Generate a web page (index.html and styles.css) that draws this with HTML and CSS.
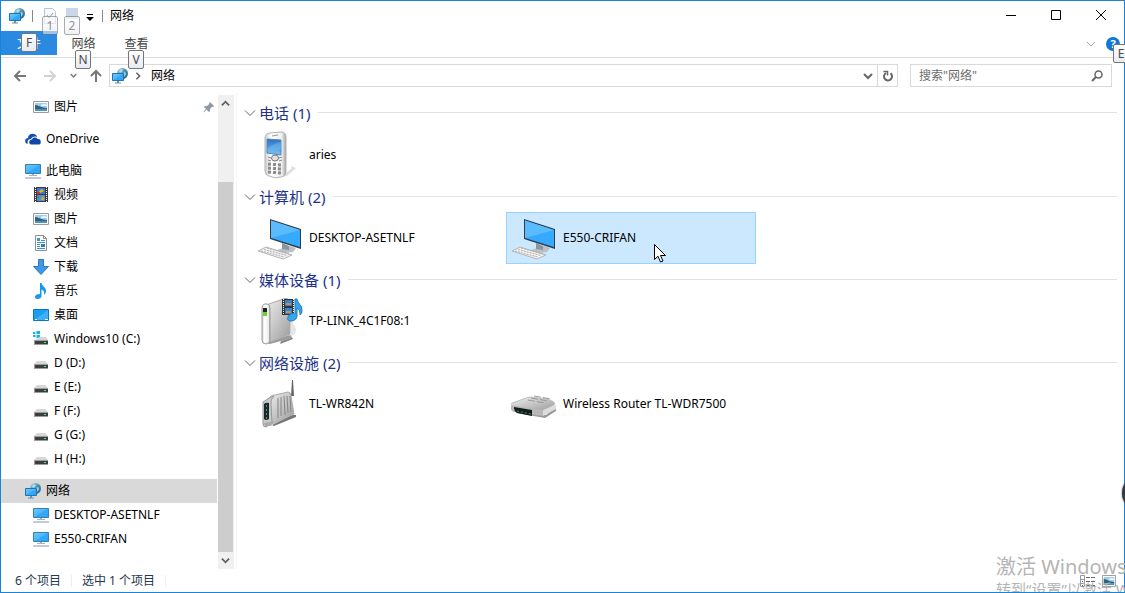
FILE: index.html
```html
<!DOCTYPE html>
<html lang="zh-CN">
<head>
    <meta charset="UTF-8">
    <meta name="viewport" content="width=device-width, initial-scale=1.0">
    <title>网络</title>
    <link rel="stylesheet" href="styles.css">
</head>
<body>
    <!-- icons -->
    <svg class="defs" width="0" height="0" aria-hidden="true">
        <defs>
            <linearGradient id="screen" x1="0" y1="0" x2="1" y2="1">
                <stop offset="0" stop-color="#6cc8ff"/><stop offset="0.5" stop-color="#4ab6fc"/><stop offset="0.5" stop-color="#33a9f8"/><stop offset="1" stop-color="#2ba5f7"/>
            </linearGradient>
            <linearGradient id="globe" x1="0" y1="0" x2="1" y2="1">
                <stop offset="0" stop-color="#a5d3e5"/><stop offset="0.5" stop-color="#4991b0"/><stop offset="1" stop-color="#1d5f80"/>
            </linearGradient>
            <linearGradient id="metal" x1="0" y1="0" x2="1" y2="1">
                <stop offset="0" stop-color="#f0f0f0"/><stop offset="1" stop-color="#9a9a9a"/>
            </linearGradient>
            <linearGradient id="white" x1="0" y1="0" x2="1" y2="0">
                <stop offset="0" stop-color="#cfcfcf"/><stop offset="0.3" stop-color="#ffffff"/><stop offset="0.8" stop-color="#efefef"/><stop offset="1" stop-color="#a0a0a0"/>
            </linearGradient>
            <linearGradient id="blue" x1="0" y1="0" x2="0" y2="1">
                <stop offset="0" stop-color="#2c6fc4"/><stop offset="1" stop-color="#7cc2f5"/>
            </linearGradient>
        </defs>
        <symbol id="i-network" viewBox="0 0 16 16">
            <circle cx="10.5" cy="5.5" r="5.5" fill="url(#globe)"/>
            <path d="M7 3l2-2 2 1-1 2-2 1zM11 5l2-1 1 2-2 3z" fill="#d3edf5" opacity=".7"/>
            <path d="M.5 5.500h11v7H.5z" fill="url(#screen)" stroke="#2474ab"/>
            <path d="M5 13h2v1.500h2v1H3v-1h2z" fill="#718fa9"/>
        </symbol>
        <symbol id="i-pc" viewBox="0 0 16 16">
            <path d="M.5 1.500h15v9H.5z" fill="url(#screen)" stroke="#3b7fa9"/>
            <path d="M7 11h2v1h3v1H4v-1h3z" fill="#a2b4c6"/>
            <path d="M0 14.500h16v1H0z" fill="#8798ac"/>
        </symbol>
        <symbol id="i-picture" viewBox="0 0 16 16">
            <path d="M.5 2.500h15v11H.5z" fill="#fff" stroke="#9a9a9a"/>
            <path d="M2 4h12v8H2z" fill="#9dcdf2"/>
            <path d="M2 6c4 0 6 3 12 3v1H2z" fill="#2f6470"/>
            <path d="M2 10h12v2H2z" fill="#4c92c4"/>
            <path d="M8 6q3-2 6 0v1H8z" fill="#eaf6fd"/>
        </symbol>
        <symbol id="i-cloud" viewBox="0 0 16 16">
            <path d="M1 12.500C-1 9 1 7 3 7c0-3 3-5 6-4 2 .5 3 2 3 3-3-1-5 0-6 2-3 0-4 2-3 4.500z" fill="#1251ae"/>
            <path d="M6 13.500c-3-1-2-5 1-5C8 6 11 6 12.500 8c2-.5 3.500 1 3 2.200 1 2-.5 3.300-2 3.300z" fill="#0c48a8"/>
        </symbol>
        <symbol id="i-video" viewBox="0 0 16 16">
            <path d="M1 0h14v15H1z" fill="#3c3c3c"/>
            <path d="M4 1h8v6H4z" fill="#3a79cf"/><path d="M4 8h8v6H4z" fill="#4d8fe0"/>
            <path d="M6 4l3-2 2 2-4 2z" fill="#e8b51e"/><path d="M4 5h3v2H4z" fill="#cc3b2c"/>
            <path d="M8 12l2-3 1 2v2H8z" fill="#d9a936"/><path d="M4 9h2v2H4z" fill="#3b944a"/>
            <path d="M2.500 0v15M13.500 0v15" stroke="#fff" stroke-width="1" stroke-dasharray="1 1"/>
        </symbol>
        <symbol id="i-doc" viewBox="0 0 16 16">
            <path d="M2.500.5h8l3 3v12h-11z" fill="#fff" stroke="#8f8f8f"/>
            <path d="M10.500.5v3h3" fill="none" stroke="#8f8f8f"/>
            <path d="M8 5.500h4M4 7.500h8M4 9.500h3M4 11.500h3M4 13.500h8" stroke="#2f94dc"/>
            <path d="M4 3h3v3H4z" fill="#3c93d6"/><path d="M8 9h4v3H8z" fill="#357cb4"/>
        </symbol>
        <symbol id="i-down" viewBox="0 0 16 16">
            <path d="M5.500.5h5v7h5L8 15.500.5 7.500h5z" fill="#3f97e6" stroke="#2b78bd"/>
        </symbol>
        <symbol id="i-music" viewBox="0 0 16 16">
            <path d="M7 0h1.500c.5 3 4.500 4 4.500 8 0 2-1 3-2 4 .8-3-.5-5-2.500-5.500V13c0 2-2 3-4 3s-2.500-1-2.500-2c0-2 2-3 5-3z" fill="#109bf0"/>
        </symbol>
        <symbol id="i-desktop" viewBox="0 0 16 16">
            <path d="M.5 2.500h15v11H.5z" fill="#1a9df5" stroke="#0a78c4"/>
            <path d="M1 13l14-10v10z" fill="#3fb0fa"/><path d="M2 12.500h2M12 12.500h3" stroke="#fff"/>
        </symbol>
        <symbol id="i-drive" viewBox="0 0 16 16">
            <path d="M4 6h8l3 3H1z" fill="#d5d7da"/><path d="M1 9h14v5H1z" fill="#9c9c9c"/>
            <path d="M2 10h13v3H2z" fill="#3c3f40"/><path d="M11 11h2v1h-2z" fill="#42e85a"/>
        </symbol>
        <symbol id="i-windrive" viewBox="0 0 16 16">
            <path d="M0 1h2.500v2H0zM3.500 0H7v3H3.500zM0 4h2.500v2H0zM3.500 4H7v3H3.500z" fill="#10b4f2"/>
            <path d="M6 6h7l2 3H2z" fill="#d5d7da"/><path d="M1 9h14v5H1z" fill="#9c9c9c"/>
            <path d="M2 10h13v3H2z" fill="#3c3f40"/><path d="M11 11h2v1h-2z" fill="#42e85a"/>
        </symbol>
        <symbol id="i-pin" viewBox="0 0 12 12">
            <path d="M7 1l4 4-1 1-1-.3L7 8v2L6 11 3.500 8.500 1 11.300.3 11 3 7.800 1 6l1-1h2l2.500-2.300L6 2z" fill="#8c9aa5"/>
        </symbol>
        <symbol id="i-chevron" viewBox="0 0 12 12">
            <path d="M1 3.500l5 5 5-5" fill="none" stroke="currentColor"/>
        </symbol>
        <symbol id="i-chevron-bold" viewBox="0 0 10 10">
            <path d="M1 3l4 4 4-4" fill="none" stroke="currentColor" stroke-width="2"/>
        </symbol>
        <symbol id="i-arrow" viewBox="0 0 14 14">
            <path d="M13 7H2M7 2L2 7l5 5" fill="none" stroke="currentColor" stroke-width="2"/>
        </symbol>
        <symbol id="b-phone" viewBox="0 0 48 48">
            <path d="M24 46l10-8v-3l5 2-9 8z" fill="#ccc" opacity=".6"/>
            <path d="M8 7q0-5 5-5l11-1q5 0 5 5v35q0 4-5 5-6 2-12-1-4-1-4-5z" fill="url(#white)" stroke="#b4b4b4"/>
            <path d="M15 5l6-1" stroke="#999"/>
            <path d="M10 8l14 1v15l-14-2z" fill="url(#blue)" stroke="#4c88bd"/>
            <path d="M10 18q7-6 14-7v7l-12 4z" fill="#70baf1" opacity=".5"/>
            <ellipse cx="18" cy="27" rx="3.500" ry="3" fill="#e4e4e4" stroke="#777"/>
            <path d="M11 26l3 1M22 27l3-1M11 29l3 1M22 30l3-1" stroke="#888"/>
            <path d="M11 33l13 1M11 37l13 1M11 41l13 1" stroke="#8b8b8b" stroke-width="3" stroke-dasharray="3 2"/>
        </symbol>
        <symbol id="b-pc" viewBox="0 0 48 48">
            <path d="M20 36l13-4 6 2-3 4-8 1z" fill="#b9bfc4"/>
            <path d="M25 29l7 3v4l-7-1z" fill="#8d959c"/>
            <path d="M13 5l31 10v20L13 25z" fill="#303d49"/>
            <path d="M14 6.500l29 9.500v17L14 24z" fill="#36aaff"/>
            <path d="M14 6.500l29 9.500-29 8z" fill="#5abcff"/>
            <path d="M1 37l8-4 26 8-9 4z" fill="#f1f1f1" stroke="#b5b5b5"/>
            <path d="M4 37l23 6M7 35.500l23 6M10 34l22 6" stroke="#b0b0b0" stroke-dasharray="2 1"/>
        </symbol>
        <symbol id="b-media" viewBox="0 0 48 48">
            <path d="M24 44l10-3-2-5 4 6-13 5z" fill="#858585"/>
            <path d="M33 20l6 12q1 5-5 7z" fill="#ccc" opacity=".5"/>
            <path d="M10 46l22-8 3 3-22 6z" fill="#9b9b9b"/>
            <path d="M9 8l17-6q7-2 7 4v31l-22 9z" fill="url(#metal)" stroke="#aaa"/>
            <path d="M5 12q0-5 3-5h2q3 0 3 4v34l-4 2q-4 0-4-4z" fill="url(#white)" stroke="#999"/>
            <path d="M6 11h4v5H6z" fill="#222"/><path d="M6 15h4v4H6z" fill="#71d12a"/>
            <path d="M25 2h12v16H25z" fill="#333"/>
            <path d="M28 3h7v6h-7zM28 11h7v6h-7z" fill="#2c86d7"/>
            <path d="M29 6h5v2h-5zM29 14h5v2h-5z" fill="#e5843b"/>
            <path d="M26.500 2v16M36.500 2v16" stroke="#fff" stroke-dasharray="1 1"/>
            <path d="M38 2h2c1 5 5 6 5 11 0 3-1 4-2 5 0-4-1-6-3-7v8c0 3-3 5-6 5s-4-2-3-4c1-3 4-4 7-3z" fill="#34a7ea" stroke="#257db8"/>
        </symbol>
        <symbol id="b-modem" viewBox="0 0 48 48">
            <path d="M35 0h1l1 16h-3z" fill="#666"/>
            <path d="M15 45l20-10h4v2l-22 9z" fill="#777"/>
            <path d="M11 20q2-5 7-5l13-3q3 0 3 4l3 18-22 10z" fill="url(#metal)" stroke="#aaa"/>
            <path d="M21 18v20M24 17v19M27 16l1 19M30 16l1 17M33 16l1 16" stroke="#858585"/>
            <path d="M6 22q7-5 11-6-4 4-3 8l1 19-6 4q-3 0-3-3z" fill="#c9c9c9" stroke="#999"/>
            <path d="M7 24q2-2 5-1v16q-3 2-5 0z" fill="#1d252b"/>
            <path d="M9.500 25v14" stroke="#27b58f" stroke-dasharray="2 2"/>
            <path d="M7 43l10-2-3 5H8z" fill="#aaa"/>
        </symbol>
        <symbol id="b-router" viewBox="0 0 48 48">
            <path d="M5 31l30 4 10-8v4l-11 7-28-5z" fill="#999"/>
            <path d="M-1 25q1-2 5-3l14-5 18 2q10 3 7 6l-11 6q-16 1-33-3z" fill="url(#metal)" stroke="#c0c0c0"/>
            <path d="M20 18l17 3M17 20l17 3M23 16l17 3" stroke="#999" stroke-dasharray="7 2"/>
            <path d="M-1 25l33 5v6L3 32q-4-2-4-6z" fill="#b8b8b8"/>
            <path d="M32 30l13-5v4l-13 7z" fill="#ddd"/>
            <path d="M3 27l18 3v6L6 33q-3-2-3-5z" fill="#151c1c"/>
            <path d="M6 31l14 3" stroke="#25a44c" stroke-dasharray="2 2"/>
        </symbol>
    </svg>

    <div class="window">
        <header class="titlebar">
            <svg class="icon"><use href="#i-network"/></svg>
            <span class="sep"></span>
            <button class="quick" aria-label="属性">
                <svg width="14" height="16"><path d="M1.500.5h8l3 3v12h-11z" fill="#f7fafc" stroke="#b9c5d0"/><path d="M4 7l2 3 4-5" fill="none" stroke="#8aa0b4"/></svg>
                <kbd class="tip faded">1</kbd>
            </button>
            <button class="quick" aria-label="新建文件夹">
                <svg width="14" height="16"><path d="M1 0h12v11H1z" fill="#c9d7e8"/></svg>
                <kbd class="tip faded">2</kbd>
            </button>
            <button class="customize" aria-label="自定义快速访问工具栏">
                <svg width="8" height="8"><path d="M1 1.500h6" stroke="#000"/><path d="M0 4h8L4 8z" fill="#000"/></svg>
            </button>
            <span class="sep"></span>
            <span class="title">网络</span>
            <div class="controls">
                <button aria-label="最小化"><svg width="10" height="10"><path d="M0 5.500h10" stroke="#000"/></svg></button>
                <button aria-label="最大化"><svg width="10" height="10"><path d="M.5.5h9v9h-9z" fill="none" stroke="#000"/></svg></button>
                <button aria-label="关闭"><svg width="10" height="10"><path d="M0 0l10 10M10 0L0 10" stroke="#000"/></svg></button>
            </div>
        </header>

        <nav class="ribbon">
            <button class="tab file">文件<kbd class="tip">F</kbd></button>
            <button class="tab">网络<kbd class="tip">N</kbd></button>
            <button class="tab">查看<kbd class="tip">V</kbd></button>
            <div class="ribbon-right">
                <button class="expand" aria-label="展开功能区"><svg width="10" height="10"><use href="#i-chevron"/></svg></button>
                <button class="help" aria-label="帮助">?<kbd class="tip">E</kbd></button>
            </div>
        </nav>

        <div class="navbar">
            <div class="arrows">
                <button aria-label="后退"><svg width="14" height="14"><use href="#i-arrow"/></svg></button>
                <button class="disabled" aria-label="前进" disabled><svg class="flip" width="14" height="14"><use href="#i-arrow"/></svg></button>
                <button class="recent" aria-label="最近浏览的位置"><svg width="7" height="7"><use href="#i-chevron-bold"/></svg></button>
                <button class="up" aria-label="上移"><svg class="turn" width="14" height="14"><use href="#i-arrow"/></svg></button>
            </div>
            <div class="address">
                <svg class="icon"><use href="#i-network"/></svg>
                <svg class="crumb" width="8" height="8"><use href="#i-chevron-bold"/></svg>
                <span class="path">网络</span>
                <button class="drop" aria-label="以前的位置"><svg width="10" height="10"><use href="#i-chevron-bold"/></svg></button>
                <button class="refresh" aria-label="刷新">
                    <svg width="12" height="12"><path d="M8.500 3.300A4 4 0 1 1 4 3" fill="none" stroke="#666" stroke-width="2"/><path d="M1.500 1.500h4v4" fill="none" stroke="#666" stroke-width="1.500"/></svg>
                </button>
            </div>
            <form class="search">
                <input type="search" aria-label="搜索" placeholder='搜索"网络"'>
                <button type="button" aria-label="搜索"><svg width="12" height="12"><circle cx="7.500" cy="4.500" r="3.500" fill="none" stroke="#666" stroke-width="1.500"/><path d="M5 7l-4 4" stroke="#666" stroke-width="2"/></svg></button>
            </form>
        </div>

        <div class="content">
            <nav class="sidebar">
                <ul>
                    <li class="child"><a href="#"><svg class="icon"><use href="#i-picture"/></svg>图片<svg class="pin"><use href="#i-pin"/></svg></a></li>
                </ul>
                <ul>
                    <li><a href="#"><svg class="icon"><use href="#i-cloud"/></svg>OneDrive</a></li>
                </ul>
                <ul>
                    <li><a href="#"><svg class="icon"><use href="#i-pc"/></svg>此电脑</a></li>
                    <li class="child"><a href="#"><svg class="icon"><use href="#i-video"/></svg>视频</a></li>
                    <li class="child"><a href="#"><svg class="icon"><use href="#i-picture"/></svg>图片</a></li>
                    <li class="child"><a href="#"><svg class="icon"><use href="#i-doc"/></svg>文档</a></li>
                    <li class="child"><a href="#"><svg class="icon"><use href="#i-down"/></svg>下载</a></li>
                    <li class="child"><a href="#"><svg class="icon"><use href="#i-music"/></svg>音乐</a></li>
                    <li class="child"><a href="#"><svg class="icon"><use href="#i-desktop"/></svg>桌面</a></li>
                    <li class="child"><a href="#"><svg class="icon"><use href="#i-windrive"/></svg>Windows10 (C:)</a></li>
                    <li class="child"><a href="#"><svg class="icon"><use href="#i-drive"/></svg>D (D:)</a></li>
                    <li class="child"><a href="#"><svg class="icon"><use href="#i-drive"/></svg>E (E:)</a></li>
                    <li class="child"><a href="#"><svg class="icon"><use href="#i-drive"/></svg>F (F:)</a></li>
                    <li class="child"><a href="#"><svg class="icon"><use href="#i-drive"/></svg>G (G:)</a></li>
                    <li class="child"><a href="#"><svg class="icon"><use href="#i-drive"/></svg>H (H:)</a></li>
                </ul>
                <ul>
                    <li class="current"><a href="#"><svg class="icon"><use href="#i-network"/></svg>网络</a></li>
                    <li class="child"><a href="#"><svg class="icon"><use href="#i-pc"/></svg>DESKTOP-ASETNLF</a></li>
                    <li class="child"><a href="#"><svg class="icon"><use href="#i-pc"/></svg>E550-CRIFAN</a></li>
                </ul>
            </nav>
            <div class="scrollbar">
                <button aria-label="向上滚动"><svg class="flip" width="9" height="9"><use href="#i-chevron-bold"/></svg></button>
                <div class="thumb"></div>
                <button aria-label="向下滚动"><svg width="9" height="9"><use href="#i-chevron-bold"/></svg></button>
            </div>

            <main>
                <section>
                    <h2><svg width="12" height="12"><use href="#i-chevron"/></svg>电话 (1)</h2>
                    <div class="items">
                        <a class="item" href="#"><svg><use href="#b-phone"/></svg>aries</a>
                    </div>
                </section>
                <section>
                    <h2><svg width="12" height="12"><use href="#i-chevron"/></svg>计算机 (2)</h2>
                    <div class="items">
                        <a class="item" href="#"><svg><use href="#b-pc"/></svg>DESKTOP-ASETNLF</a>
                        <a class="item selected" href="#"><svg><use href="#b-pc"/></svg>E550-CRIFAN
                            <svg class="cursor" viewBox="0 0 12 19"><path d="M.5.5v15l3.500-3.300 2.500 5.800 2.500-1-2.500-5.500h5z" fill="#fff" stroke="#000"/></svg>
                        </a>
                    </div>
                </section>
                <section>
                    <h2><svg width="12" height="12"><use href="#i-chevron"/></svg>媒体设备 (1)</h2>
                    <div class="items">
                        <a class="item" href="#"><svg><use href="#b-media"/></svg>TP-LINK_4C1F08:1</a>
                    </div>
                </section>
                <section>
                    <h2><svg width="12" height="12"><use href="#i-chevron"/></svg>网络设施 (2)</h2>
                    <div class="items">
                        <a class="item" href="#"><svg><use href="#b-modem"/></svg>TL-WR842N</a>
                        <a class="item" href="#"><svg><use href="#b-router"/></svg>Wireless Router TL-WDR7500</a>
                    </div>
                </section>
            </main>
        </div>

        <footer class="status">
            <span>6 个项目</span>
            <span>选中 1 个项目</span>
            <div class="views">
                <button aria-label="详细信息">
                    <svg width="16" height="12"><path d="M.5.5h4v11h-4zM.5 4.500h4M.5 8.500h4" fill="#fff" stroke="#999"/><path d="M6 2.500h4M11 2.500h4M6 6.500h4M11 6.500h4M6 10.500h4M11 10.500h4" stroke="#666"/><path d="M2 6h1v1H2z" fill="#36c"/><path d="M2 10h1v1H2z" fill="#c33"/></svg>
                </button>
                <button aria-label="大图标"><svg width="14" height="12" viewBox="0 2 16 12" preserveAspectRatio="none"><use href="#i-picture" width="16" height="16"/></svg></button>
            </div>
        </footer>
    </div>

    <div class="watermark">
        <p class="big">激活 Windows</p>
        <p>转到“设置”以激活 Windows。</p>
    </div>
    <div class="bubble"></div>
</body>
</html>
```
FILE: styles.css
```css
* { box-sizing: border-box; }
body { margin: 0; overflow: hidden; background: #fff; color: #000; font: 12px/16px "Noto Sans", "Noto Sans CJK SC", sans-serif; }
button { display: flex; align-items: center; justify-content: center; padding: 0; border: 0; background: none; color: inherit; font: inherit; }
a { color: inherit; text-decoration: none; }
svg { display: block; flex: none; overflow: visible; }
.defs { position: absolute; }
.icon { width: 16px; height: 16px; }
.flip { transform: rotate(180deg); }
.turn { transform: rotate(90deg); }

.window { display: flex; flex-direction: column; height: 100vh; border: 1px solid #1883d7; }

/* title bar */
.titlebar { display: flex; align-items: center; height: 30px; padding-left: 8px; }
.sep { width: 1px; height: 12px; margin: 0 7px; background: #888; }
.quick { position: relative; width: 22px; height: 16px; }
.sep + .quick { margin-left: -1px; }
.customize { width: 8px; margin: 2px 1px 0 3px; }
.controls { display: flex; height: 28px; margin: 0 1px 2px auto; }
.controls button { width: 45px; }

/* key tips */
.tip { position: absolute; z-index: 2; width: 16px; height: 19px; border: 1px solid #767676; border-radius: 2px; background: linear-gradient(#fff, #e6eaf2); color: #4a4a4a; font: 12px/17px "Noto Sans", sans-serif; text-align: center; }
.tip.faded { top: 8px; left: 3px; opacity: 0.6; }

/* ribbon */
.ribbon { display: flex; height: 27px; border-bottom: 1px solid #dadbdc; }
.tab { position: relative; width: 53px; height: 24px; padding-top: 2px; color: #444; }
.tab .tip { top: 19px; left: 18px; }
.tab.file { width: 56px; background: #2a8ae2; color: #fff; }
.tab.file .tip { top: 2px; left: 20px; }
.ribbon-right { display: flex; align-items: center; margin-left: auto; gap: 10px; }
.expand { color: #888; }
.help { position: relative; width: 14px; height: 14px; margin-right: 4px; border-radius: 50%; background: #0f78d4; color: #fff; font-size: 11px; font-weight: bold; }
.help .tip { top: 7px; left: 7px; }

/* address bar */
.navbar { display: flex; align-items: center; height: 35px; padding-right: 12px; }
.arrows { display: flex; align-items: center; width: 108px; padding-left: 12px; color: #777; }
.arrows button { margin-right: 16px; }
.arrows .disabled { margin-right: 13px; color: #d2d2d2; }
.arrows .recent { margin: 0 12px 0 0; }
.arrows .up { margin: 0; }
.address { display: flex; flex: 1; align-items: center; height: 23px; margin-right: 12px; padding-left: 2px; border: 1px solid #d9d9d9; color: #666; }
.crumb { margin: 0 9px 0 6px; transform: rotate(-90deg); }
.path { color: #000; }
.drop { width: 18px; margin-left: auto; }
.refresh { width: 20px; height: 100%; border-left: 1px solid #d9d9d9; }
.search { display: flex; width: 202px; height: 23px; border: 1px solid #d9d9d9; }
.search input { flex: 1; min-width: 0; padding: 0 8px; border: 0; outline: 0; background: none; font: inherit; }
.search input::placeholder { color: #6d6d6d; }
.search button { width: 28px; }

/* folder tree */
.content { display: flex; flex: 1; min-height: 0; }
.sidebar { width: 217px; padding-top: 2px; overflow: hidden; }
.sidebar ul { margin: 0 0 8px; padding: 0; list-style: none; }
.sidebar a { display: flex; align-items: center; gap: 5px; height: 24px; margin-right: 1px; padding-left: 24px; }
.sidebar .child a { padding-left: 32px; }
.sidebar .current a { background: #d9d9d9; }
.sidebar .pin { width: 12px; height: 12px; margin: 0 2px 0 auto; }
.scrollbar { display: flex; flex-direction: column; width: 16px; margin: 2px 2px 0 0; background: #f0f0f0; color: #606060; }
.scrollbar button { width: 15px; height: 17px; }
.thumb { flex: 1; margin: 70px 1px 0 0; background: #cdcdcd; }

/* devices */
main { flex: 1; min-width: 0; padding: 4px 7px 0; border-left: 1px solid #f5f5f5; }
h2 { display: flex; align-items: center; height: 31px; margin: 0; color: #1e3287; font-size: 15px; font-weight: normal; line-height: 20px; }
h2 svg { margin-right: 3px; color: #666; }
h2::after { content: ""; flex: 1; height: 1px; margin-left: 8px; background: #e2e2e2; }
.items { display: flex; gap: 4px; padding-left: 8px; }
section .items { margin-bottom: 0; }
.item { position: relative; display: flex; align-items: center; gap: 4px; width: 250px; height: 52px; padding-left: 4px; border: 1px solid transparent; }
section:first-child .items { padding-top: 1px; }
section + section h2 { margin-top: 0; }
.item svg { width: 48px; height: 48px; }
.item.selected { border-color: #99d1ff; background: #cce8ff; }
.item .cursor { position: absolute; top: 31px; left: 147px; width: 12px; height: 19px; }

/* status bar */
.status { display: flex; align-items: center; height: 23px; color: #26374f; }
.status span { padding: 0 10px 0 14px; border-right: 1px solid #eee; line-height: 12px; }
.status span + span { padding-left: 10px; }
.views { display: flex; gap: 6px; margin-left: auto; padding-right: 8px; }

/* activation notice and floating widget on top of the window */
.watermark { position: absolute; right: 0; bottom: 1px; width: 129px; height: 37px; overflow: hidden; color: #b4b4b4; font-size: 15px; line-height: 20px; white-space: nowrap; pointer-events: none; }
.watermark p { margin: 0; }
.watermark .big { font-size: 20px; line-height: 24px; }
.bubble { position: absolute; right: -33px; bottom: 82px; width: 36px; height: 36px; border-radius: 50%; background: #333b42; box-shadow: 0 0 2px #555; }
```
